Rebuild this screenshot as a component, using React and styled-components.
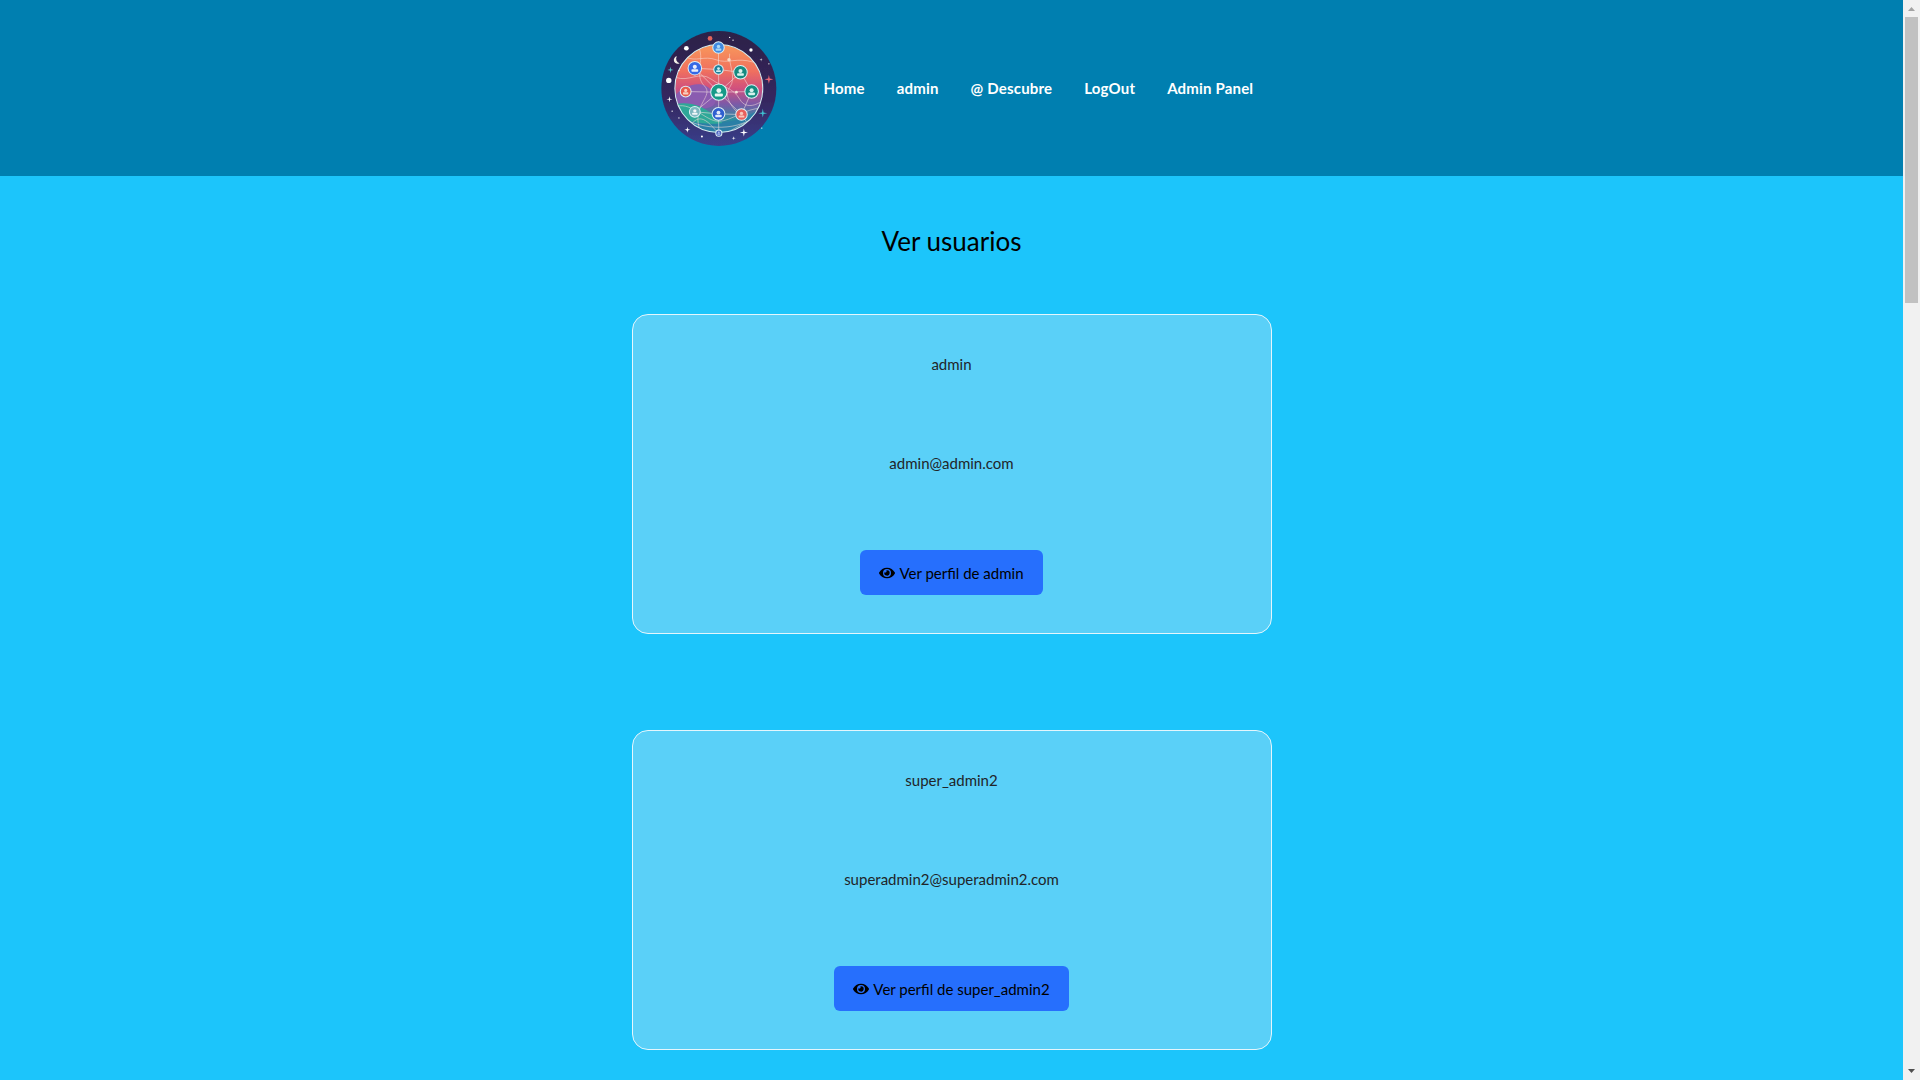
import styled, { createGlobalStyle } from "styled-components";
import { FaEye } from "react-icons/fa";

const users = [
    { name: "admin", email: "admin@admin.com" },
    { name: "super_admin2", email: "superadmin2@superadmin2.com" },
];

const links = ["Home", "admin", "@ Descubre", "LogOut", "Admin Panel"];

const nodes = [
    [207, 82, 17, "#3f8ae0", "#a9d8f5"],
    [137, 143, 20, "#3569e6", "#e8eefc"],
    [207, 147, 14, "#1f7f9a", "#cfeef0"],
    [272, 155, 20, "#168a80", "#d8f3ee"],
    [110, 212, 16, "#ea5a4c", "#f8d0c0"],
    [208, 214, 24, "#149a88", "#e6f7f2"],
    [305, 212, 20, "#128a80", "#d5f1ec"],
    [137, 272, 16, "#7db8c0", "#f2f6f8"],
    [207, 278, 19, "#2f5fd0", "#e0e8fa"],
    [275, 280, 17, "#e8605c", "#f7c8bc"],
    [208, 335, 9, "#4a62c0", "#aab8ea"],
];

const lines = [
    [0, 2], [2, 5], [5, 8], [8, 10], [1, 2], [2, 3], [4, 5], [5, 6], [3, 6],
    [7, 8], [8, 9], [6, 9], [1, 5], [3, 5], [5, 7], [5, 9],
];

// thin map lines crossing the globe
const curves = [
    "M80 170C120 185 150 150 185 175S250 200 270 235 330 245 335 240",
    "M110 110C140 125 165 105 200 118S260 110 310 125",
    "M240 100C235 130 262 170 240 200S255 270 290 300",
    "M150 85C165 120 135 165 165 195S130 250 150 320",
    "M85 255C130 245 170 300 207 300S290 260 332 262",
    "M100 290C150 320 250 335 318 285",
    "M130 305C160 270 190 320 207 335S260 310 290 305",
];

const dots = [
    [182, 55, 7, "#e0635a"], [112, 84, 7, "#fff"], [303, 89, 5, "#fff"], [60, 179, 8, "#fff"],
    [356, 130, 2, "#fff"], [90, 150, 2, "#fff"], [115, 325, 3, "#fff"],
    [158, 345, 3, "#fff"], [250, 60, 2, "#fff"], [335, 320, 2, "#fff"], [90, 290, 2, "#fff"],
    [240, 52, 2, "#fff"], [70, 270, 2, "#fff"], [238, 118, 5, "#f6dcc8"], [260, 214, 4, "#f6e0d8"],
];

const sparkles = [
    [356, 176, 13, "#e86a78"], [338, 276, 13, "#3fc0d0"], [65, 148, 9, "#58d0d0"],
    [62, 235, 9, "#fff"], [115, 325, 9, "#fff"], [282, 333, 12, "#fff"], [252, 350, 6, "#fff"],
    [333, 118, 5, "#fff"],
];

function sparkle(x, y, r) {
    const k = r * 0.18;
    return `${x},${y - r} ${x + k},${y - k} ${x + r},${y} ${x + k},${y + k} ${x},${y + r} ${x - k},${y + k} ${x - r},${y} ${x - k},${y - k}`;
}

function Logo() {
    return (
        <LogoSvg viewBox="37 33 343 340">
            <defs>
                <linearGradient id="globe" x1="0" y1="0" x2="0" y2="1">
                    <stop offset="0" stopColor="#f8985a" />
                    <stop offset="0.3" stopColor="#f0705e" />
                    <stop offset="0.5" stopColor="#d0507e" />
                    <stop offset="0.68" stopColor="#7a5aa8" />
                    <stop offset="0.85" stopColor="#2c8ea0" />
                    <stop offset="1" stopColor="#2f5a9a" />
                </linearGradient>
                <linearGradient id="space" x1="0" y1="0" x2="0" y2="1">
                    <stop offset="0" stopColor="#2c2148" />
                    <stop offset="0.6" stopColor="#35275f" />
                    <stop offset="1" stopColor="#3a3f8c" />
                </linearGradient>
                <clipPath id="inner">
                    <circle cx="208" cy="203" r="130" />
                </clipPath>
                <filter id="soft">
                    <feGaussianBlur stdDeviation="1.6" />
                </filter>
            </defs>
            <g filter="url(#soft)">
                <circle cx="208" cy="203" r="170" fill="url(#space)" />
                <circle cx="208" cy="203" r="130" fill="url(#globe)" />
                <g clipPath="url(#inner)">
                    <path d="M78 225C100 195 165 170 190 215S175 265 130 262 85 260 78 225z" fill="#8a5cb0" />
                    <path d="M78 250C120 240 160 255 190 280S240 320 230 345H120C95 320 80 290 78 250z" fill="#2fa898" />
                    <path d="M110 295C150 310 230 320 320 270L300 320 208 345 130 330z" fill="#2c7fa6" />
                    {curves.map(d => (
                        <path key={d} d={d} fill="none" stroke="#f8e2dc" strokeWidth="2.2" opacity="0.7" />
                    ))}
                </g>
                <circle cx="208" cy="203" r="130" fill="none" stroke="#d6eef2" strokeWidth="3" />
                {lines.map(([a, b]) => (
                    <line
                        key={`${a}-${b}`}
                        x1={nodes[a][0]}
                        y1={nodes[a][1]}
                        x2={nodes[b][0]}
                        y2={nodes[b][1]}
                        stroke="#f4e6e6"
                        strokeWidth="2"
                        opacity="0.8"
                    />
                ))}
                {dots.map(([x, y, r, c]) => (
                    <circle key={`${x}-${y}`} cx={x} cy={y} r={r} fill={c} />
                ))}
                {sparkles.map(([x, y, r, c]) => (
                    <polygon key={`${x}-${y}`} points={sparkle(x, y, r)} fill={c} />
                ))}
                <path d="M84 108a11 11 0 1 0 8 20 13 13 0 0 1-8-20z" fill="#f4f0e8" />
                {nodes.map(([x, y, r, c, inner]) => (
                    <g key={`${x}-${y}`}>
                        <circle cx={x} cy={y} r={r} fill={c} stroke="#dff2f6" strokeWidth="3" />
                        <circle cx={x} cy={y - r * 0.2} r={r * 0.3} fill={inner} />
                        <rect x={x - r * 0.5} y={y + r * 0.15} width={r} height={r * 0.38} rx={r * 0.12} fill={inner} />
                    </g>
                ))}
            </g>
        </LogoSvg>
    );
}

export default function App() {
    return (
        <Page>
            <GlobalStyle />
            <Content>
                <Header>
                    <NavBar>
                        <Logo />
                        <NavList>
                            {links.map(link => (
                                <NavLink key={link} href="#">{link}</NavLink>
                            ))}
                        </NavList>
                    </NavBar>
                </Header>
                <Main>
                    <Title>Ver usuarios</Title>
                    {users.map(user => (
                        <Card key={user.name}>
                            <Info>{user.name}</Info>
                            <Info>{user.email}</Info>
                            <ProfileButton>
                                <FaEye size={16} />
                                Ver perfil de {user.name}
                            </ProfileButton>
                        </Card>
                    ))}
                </Main>
            </Content>
            <ScrollBar>
                <Arrow viewBox="0 0 7 4" $color="#a3a3a3"><path d="M3.5 0L7 4H0z" /></Arrow>
                <Thumb />
                <Arrow viewBox="0 0 7 4" $color="#505050"><path d="M0 0h7L3.5 4z" /></Arrow>
            </ScrollBar>
        </Page>
    );
}

const GlobalStyle = createGlobalStyle`
    body {
        margin: 0;
        background: #1cc5fb;
        font-family: "Lato", "Liberation Sans", sans-serif;
    }
`;

const Page = styled.div`
    display: flex;
    align-items: flex-start;
`;

const Content = styled.div`
    flex: 1;
    min-width: 0;
`;

const ScrollBar = styled.aside`
    position: sticky;
    top: 0;
    width: 17px;
    height: 100vh;
    flex-shrink: 0;
    background: #f1f1f1;
    display: flex;
    flex-direction: column;
    align-items: center;
    justify-content: space-between;
    padding: 7px 0;
    box-sizing: border-box;
`;

const Arrow = styled.svg`
    width: 7px;
    height: 4px;
    fill: ${props => props.$color};
`;

const Thumb = styled.div`
    width: 13px;
    height: 286px;
    margin: 6px 0 auto;
    background: #c1c1c1;
`;

const Header = styled.header`
    height: 176px;
    background: #007fb0;
    display: flex;
    justify-content: center;
`;

const NavBar = styled.nav`
    width: 640px;
    box-sizing: border-box;
    padding-left: 29px;
    display: flex;
    align-items: center;
    flex-shrink: 0;
`;

const LogoSvg = styled.svg`
    width: 116px;
    height: 115px;
    margin-right: 47px;
    flex-shrink: 0;
`;

const NavList = styled.div`
    display: flex;
    gap: 32px;
    white-space: nowrap;
`;

const NavLink = styled.a`
    color: #fff;
    font-size: 15px;
    font-weight: 700;
    letter-spacing: 0.18px;
    text-decoration: none;
`;

const Main = styled.main`
    min-height: 3774px;
    display: flex;
    flex-direction: column;
    align-items: center;
`;

const Title = styled.h2`
    margin: 46px 0 54px;
    height: 38px;
    line-height: 38px;
    font-size: 26px;
    font-weight: 400;
    color: #000;
`;

const Card = styled.section`
    width: 640px;
    height: 320px;
    box-sizing: border-box;
    margin-bottom: 96px;
    padding-top: 37px;
    display: flex;
    flex-direction: column;
    align-items: center;
    gap: 75px;
    background: #5ad0f8;
    border: 1px solid #e4f6fd;
    border-radius: 16px;
`;

const Info = styled.p`
    margin: 0;
    line-height: 24px;
    font-size: 15px;
    color: #212529;
`;

const ProfileButton = styled.button`
    height: 45px;
    padding: 0 19px;
    display: flex;
    align-items: center;
    gap: 4px;
    background: #266ffd;
    border: 0;
    border-radius: 6px;
    font-family: inherit;
    font-size: 15px;
    color: #000;
`;
